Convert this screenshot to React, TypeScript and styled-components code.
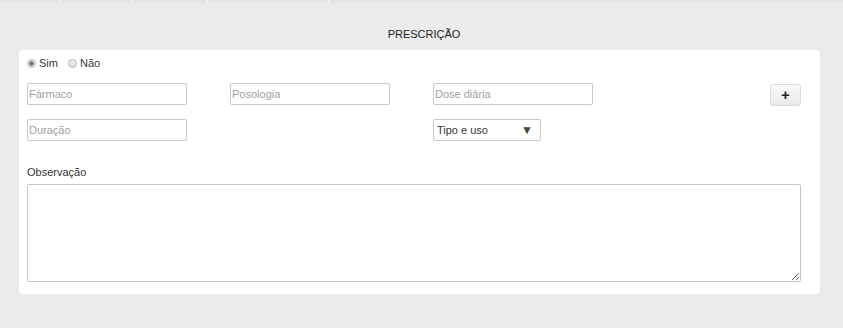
import styled, { createGlobalStyle } from "styled-components";

const Global = createGlobalStyle`
  html, body {
    margin: 0;
    padding: 0;
    background: #ebebeb;
    font-family: "Liberation Sans", Arial, sans-serif;
    font-size: 11px;
    color: #333;
  }
`;

const Page = styled.div`
  width: 843px;
  height: 328px;
  overflow: hidden;
`;

const Tabs = styled.div`
  display: flex;
  height: 3px;
  background: linear-gradient(#e2e2e2, #e8e8e8);
`;

const Tab = styled.div<{ $w: number }>`
  width: ${(p) => p.$w}px;
  border-right: 2px solid #f1f1f1;
`;

const Title = styled.h2`
  margin: 0;
  padding: 25px 0 0 5px;
  height: 22px;
  text-align: center;
  font-size: 11px;
  font-weight: normal;
  line-height: 13px;
  color: #222;
`;

const Panel = styled.section`
  margin: 0 23px 0 19px;
  background: #fff;
  border-radius: 4px;
  padding: 7px 19px 12px 8px;
  box-shadow: 0 0 1px rgba(0, 0, 0, 0.04);
`;

const RadioRow = styled.div`
  display: flex;
  align-items: center;
  gap: 10px;
  height: 12px;
`;

const RadioLabel = styled.label`
  display: flex;
  align-items: center;
  gap: 3px;
  color: #3a3a3a;
`;

const Dot = styled.span<{ $on?: boolean }>`
  width: 7px;
  height: 7px;
  border-radius: 50%;
  border: 1px solid #b5b5b5;
  background: ${(p) =>
    p.$on
      ? "radial-gradient(circle, #777 0 2px, #e8e8e8 2.5px)"
      : "linear-gradient(#f4f4f4, #dcdcdc)"};
`;

const Grid = styled.div`
  display: grid;
  grid-template-columns: 203px 203px 1fr 31px;
  row-gap: 13px;
  margin-top: 14px;
`;

const Field = styled.input`
  box-sizing: border-box;
  width: 160px;
  height: 22px;
  border: 1px solid #c9c9c9;
  border-radius: 2px;
  padding: 0 1px;
  font: 11px "Liberation Sans", Arial, sans-serif;
  color: #333;
  &::placeholder {
    color: #a0a0a0;
  }
`;

const AddButton = styled.button`
  box-sizing: border-box;
  width: 31px;
  height: 22px;
  margin-top: 1px;
  border: 1px solid #dcdcdc;
  border-radius: 3px;
  background: linear-gradient(#fafafa, #e9e9e9);
  font: bold 15px "Liberation Sans", Arial, sans-serif;
  line-height: 18px;
  color: #222;
  padding: 0;
`;

const Select = styled.div`
  box-sizing: border-box;
  width: 108px;
  height: 22px;
  border: 1px solid #c9c9c9;
  border-radius: 2px;
  display: flex;
  align-items: center;
  justify-content: space-between;
  padding: 0 7px 0 3px;
  color: #333;
`;

const Arrow = styled.span`
  font-size: 12px;
  color: #444;
`;

const Empty = styled.div``;

const Label = styled.div`
  margin-top: 25px;
  height: 12px;
  line-height: 12px;
  color: #333;
`;

const Notes = styled.textarea`
  display: block;
  box-sizing: border-box;
  width: 774px;
  height: 98px;
  margin-top: 6px;
  border: 1px solid #c6c6c6;
  border-radius: 2px;
  resize: both;
`;

export default function App() {
  return (
    <Page>
      <Global />
      <Tabs>
        <Tab $w={60} />
        <Tab $w={70} />
        <Tab $w={72} />
        <Tab $w={120} />
      </Tabs>
      <Title>PRESCRIÇÃO</Title>
      <Panel>
        <RadioRow>
          <RadioLabel>
            <Dot $on />
            Sim
          </RadioLabel>
          <RadioLabel>
            <Dot />
            Não
          </RadioLabel>
        </RadioRow>
        <Grid>
          <Field placeholder="Fármaco" />
          <Field placeholder="Posologia" />
          <Field placeholder="Dose diária" />
          <AddButton>+</AddButton>
          <Field placeholder="Duração" />
          <Empty />
          <Select>
            Tipo e uso
            <Arrow>▼</Arrow>
          </Select>
          <Empty />
        </Grid>
        <Label>Observação</Label>
        <Notes />
      </Panel>
    </Page>
  );
}
